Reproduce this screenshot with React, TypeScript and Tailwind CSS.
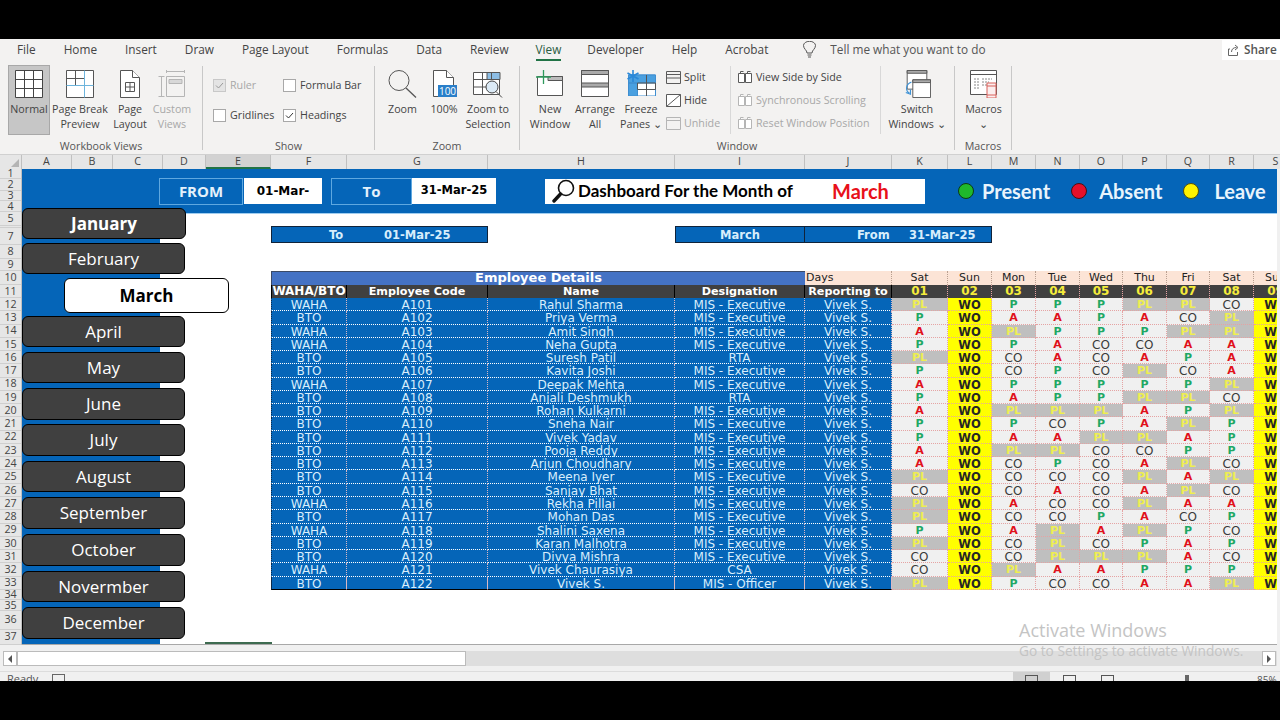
import React from "react";

const gutterRows = [
  ["1", "h-[10px]"], ["2", "h-[12px]"], ["3", "h-[10px]"], ["4", "h-[11px]"], ["5", "h-[14px]"], ["", "h-[2px]"],
  ["7", "h-[17px]"], ["8", "h-[14px]"], ["9", "h-[12px]"], ["10", "h-[14px]"], ["11", "h-[13px]"],
  ...Array.from({ length: 22 }, (_, i) => [String(i + 12), "h-[13.27px]"]),
  ["34", "h-[10px]"], ["35", "h-[11px]"], ["36", "h-[19px]"], ["37", "h-[15px]"],
];

const columns = [
  ["A", "w-[50px]"], ["B", "w-[41px]"], ["C", "w-[50px]"], ["D", "w-[43px]"], ["E", "w-[65px]"], ["F", "w-[76px]"],
  ["G", "w-[141px]"], ["H", "w-[187px]"], ["I", "w-[130px]"], ["J", "w-[87px]"], ["K", "w-[56px]"], ["L", "w-[44px]"],
  ["M", "w-[44px]"], ["N", "w-[44px]"], ["O", "w-[43px]"], ["P", "w-[44px]"], ["Q", "w-[43px]"], ["R", "w-[44px]"], ["S", "w-[44px]"],
];

const months = [
  { name: "January", cls: "mt-[-6px] h-[31px] w-[164px] bg-[#404040] text-white font-bold" },
  { name: "February", cls: "mt-[4px] h-[31px] w-[163px] bg-[#404040] text-white" },
  { name: "March", cls: "mt-[4px] ml-[42px] h-[35px] w-[165px] bg-white text-black font-bold" },
  { name: "April", cls: "mt-[3px] h-[31px] w-[163px] bg-[#404040] text-white" },
  { name: "May", cls: "mt-[5px] h-[31px] w-[163px] bg-[#404040] text-white" },
  { name: "June", cls: "mt-[5px] h-[32px] w-[163px] bg-[#404040] text-white" },
  { name: "July", cls: "mt-[4px] h-[32px] w-[163px] bg-[#404040] text-white" },
  { name: "August", cls: "mt-[5px] h-[31px] w-[163px] bg-[#404040] text-white" },
  { name: "September", cls: "mt-[5px] h-[32px] w-[163px] bg-[#404040] text-white" },
  { name: "October", cls: "mt-[5px] h-[32px] w-[163px] bg-[#404040] text-white" },
  { name: "Novermber", cls: "mt-[5px] h-[31px] w-[163px] bg-[#404040] text-white" },
  { name: "December", cls: "mt-[5px] h-[32px] w-[163px] bg-[#404040] text-white" },
];

const employees = [
  ["WAHA", "A101", "Rahul Sharma", "MIS - Executive", "PL WO P P P PL PL CO WO"],
  ["BTO", "A102", "Priya Verma", "MIS - Executive", "P WO A A P A CO PL WO"],
  ["WAHA", "A103", "Amit Singh", "MIS - Executive", "A WO PL P P P PL PL WO"],
  ["WAHA", "A104", "Neha Gupta", "MIS - Executive", "P WO P A CO CO A A WO"],
  ["BTO", "A105", "Suresh Patil", "RTA", "PL WO CO A CO A P A WO"],
  ["BTO", "A106", "Kavita Joshi", "MIS - Executive", "P WO CO P CO PL CO A WO"],
  ["WAHA", "A107", "Deepak Mehta", "MIS - Executive", "A WO P P P P P PL WO"],
  ["BTO", "A108", "Anjali Deshmukh", "RTA", "P WO A P P PL PL CO WO"],
  ["BTO", "A109", "Rohan Kulkarni", "MIS - Executive", "A WO PL PL PL A P PL WO"],
  ["BTO", "A110", "Sneha Nair", "MIS - Executive", "P WO P CO P A PL P WO"],
  ["BTO", "A111", "Vivek Yadav", "MIS - Executive", "P WO A A PL PL A P WO"],
  ["BTO", "A112", "Pooja Reddy", "MIS - Executive", "A WO PL PL CO CO P P WO"],
  ["BTO", "A113", "Arjun Choudhary", "MIS - Executive", "A WO CO P CO A PL CO WO"],
  ["BTO", "A114", "Meena Iyer", "MIS - Executive", "PL WO CO CO CO PL A PL WO"],
  ["BTO", "A115", "Sanjay Bhat", "MIS - Executive", "CO WO CO A CO A PL CO WO"],
  ["WAHA", "A116", "Rekha Pillai", "MIS - Executive", "PL WO A CO CO PL A A WO"],
  ["BTO", "A117", "Mohan Das", "MIS - Executive", "PL WO CO CO P A CO P WO"],
  ["WAHA", "A118", "Shalini Saxena", "MIS - Executive", "P WO A PL A PL P CO WO"],
  ["BTO", "A119", "Karan Malhotra", "MIS - Executive", "PL WO CO PL CO P A P WO"],
  ["BTO", "A120", "Divya Mishra", "MIS - Executive", "CO WO CO PL PL PL A CO WO"],
  ["WAHA", "A121", "Vivek Chaurasiya", "CSA", "CO WO PL A A P P P WO"],
  ["BTO", "A122", "Vivek S.", "MIS - Officer", "PL WO P CO CO A A PL WO"],
];

const days = [
  ["Sat", "01"], ["Sun", "02"], ["Mon", "03"], ["Tue", "04"], ["Wed", "05"],
  ["Thu", "06"], ["Fri", "07"], ["Sat", "08"], ["Sun", "09"],
];

const statusClass: Record<string, string> = {
  PL: "bg-[#bfbfbf] text-[#eeee50] font-bold text-[11px]",
  WO: "bg-[#ffff00] text-[#262626] font-bold text-[11.5px]",
  P: "bg-[#f0f0f0] text-[#1fa864] font-bold text-[11px]",
  A: "bg-[#f0f0f0] text-[#e0101a] font-bold text-[11px]",
  CO: "bg-[#f0f0f0] text-[#3a3a3a]",
};

const tabs = ["File", "Home", "Insert", "Draw", "Page Layout", "Formulas", "Data", "Review", "View", "Developer", "Help", "Acrobat"];

const line = "#5a5a5a";
const faint = "#b5b5b5";

const NormalIcon = () => (
  <svg width="28" height="28" viewBox="0 0 28 28" fill="#fff" stroke="#444">
    <path d="M.5.5h27v27H.5z" /><path d="M9.500.5v27M18.500.5v27M.5 9.500h27M.5 18.500h27" />
  </svg>
);
const PageBreakIcon = () => (
  <svg width="28" height="28" viewBox="0 0 28 28" fill="#fff" stroke="#555">
    <path d="M.5.5h27v27H.5z" /><path d="M9.500.5v15M.5 8.500h18" /><path d="M18.500.5v27M.5 15.500h27" stroke="#6db4dc" />
  </svg>
);
const PageLayoutIcon = () => (
  <svg width="24" height="28" viewBox="0 0 24 28" fill="#fff" stroke="#555">
    <path d="M2.500.5h12l7 7v20h-19z" /><path d="M14.500.5v7h7" /><path d="M7.500 12.500h9v9h-9zM7.500 17h9M12 12.500v9" fill="none" />
  </svg>
);
const CustomViewsIcon = () => (
  <svg width="28" height="28" viewBox="0 0 28 28" fill="none" stroke={faint}>
    <path d="M.5 6.500h6M3.500 6.500v20M.5 26.500h6M8.500 1.500h18M8.500 0v3M26.500 0v3M8.500 6.500h18v20h-18z" /><path d="M11 9.500h13v4H11z" fill="#d8d8d8" />
  </svg>
);
const ZoomIcon = () => (
  <svg width="29" height="28" viewBox="0 0 29 28" fill="none" stroke="#555">
    <circle cx="11" cy="10.500" r="10" /><path d="M18 18l10 9.500" strokeWidth="1.300" />
  </svg>
);
const HundredIcon = () => (
  <svg width="28" height="28" viewBox="0 0 28 28" fill="#fff" stroke="#555">
    <path d="M3.500.5h13l7 7v19h-20z" /><path d="M16.500.5v7h7" />
    <path d="M8 15h19v12H8z" fill="#2a7fc9" stroke="none" />
    <text x="17.500" y="25" fontSize="10" textAnchor="middle" fill="#fff" stroke="none" fontFamily="Open Sans">100</text>
  </svg>
);
const ZoomSelIcon = () => (
  <svg width="30" height="28" viewBox="0 0 30 28" fill="#fff" stroke="#555" className="mt-[2px]">
    <path d="M.5.5h26v22H.5z" /><path d="M14 .5h13v7H14z" fill="#8cbde4" /><path d="M9.500.5v22M18.500.5v7M.5 7.500h26M.5 15h13" />
    <circle cx="19" cy="15" r="6" fill="#dbeaf6" stroke="#444" /><path d="M23 19.500l6 6" stroke="#444" />
  </svg>
);
const NewWindowIcon = () => (
  <svg width="28" height="26" viewBox="0 0 28 26" fill="#fff" stroke="#555">
    <path d="M1.500 6.500h25v19h-25z" /><path d="M12 6.500h14.500v4H12z" fill="#bbb" />
    <path d="M7.500 0v14M0 7h15" stroke="#2e9a5c" strokeWidth="1.300" />
  </svg>
);
const ArrangeIcon = () => (
  <svg width="28" height="27" viewBox="0 0 28 27" fill="#fff" stroke="#555">
    <path d="M.5.5h27v26H.5z" /><path d="M.5.5h27v4H.5z" fill="#aaa" /><path d="M.5 13h27v4H.5z" fill="#aaa" />
  </svg>
);
const FreezeIcon = () => (
  <svg width="30" height="26" viewBox="0 0 30 26" fill="#fff" stroke="#3f8ed0">
    <path d="M2.500 5h27v21h-27z" /><path d="M2.500 5h27v8h-27zM2.500 13h9v13h-9z" fill="#4aa0e0" /><path d="M11.500 13h18v6.500h-18zM20.500 5v21" fill="none" stroke="#555" />
    <path d="M7 0v12M1.500 3l11 6M12.500 3l-11 6" stroke="#2b88d8" strokeWidth="1.600" />
  </svg>
);
const SplitIcon = () => (
  <svg width="15" height="13" viewBox="0 0 15 13" fill="none" stroke={line}>
    <path d="M.5.5h14v12H.5zM.5 3.500h14M.5 7h14" />
  </svg>
);
const HideIcon = () => (
  <svg width="15" height="13" viewBox="0 0 15 13" fill="#fff" stroke={line}>
    <path d="M.5.5h14v12H.5zM.5 12.500l14-12" />
  </svg>
);
const UnhideIcon = () => (
  <svg width="15" height="13" viewBox="0 0 15 13" fill="none" stroke={faint}>
    <path d="M.5.5h14v12H.5zM.5 3.500h14" />
  </svg>
);
const SideBySideIcon = ({ color = line }: { color?: string }) => (
  <svg width="14" height="13" viewBox="0 0 14 13" fill="#fff" stroke={color}>
    <path d="M.5 2.500h6v9h-6zM7.500 2.500h6v9h-6zM2.500 2.500v-2h3M9.500 2.500v-2h3" />
  </svg>
);
const SwitchIcon = () => (
  <svg width="28" height="28" viewBox="0 0 30 30" fill="#fff" stroke="#555">
    <path d="M4.500.5h21v20h-21z" /><path d="M4.500.5h21v3h-21z" fill="#aaa" />
    <path d="M10.500 10.500h19v19h-19z" /><path d="M10.500 10.500h19v3h-19z" fill="#aaa" />
    <path d="M9 13c-6 2-7 9-2 12M3 24l5 2 0-5" fill="none" stroke="#3f93d6" strokeWidth="1.200" />
  </svg>
);
const MacrosIcon = () => (
  <svg width="28" height="28" viewBox="0 0 28 28" fill="#fff" stroke="#555">
    <path d="M.5.5h26v24H.5z" /><path d="M.5 4.500h26" />
    <path d="M4 9h6M4 12h6M4 15h6M4 18h6M12 9h10M12 12h7M12 15h5" stroke="#888" strokeDasharray="2 1" />
    <path d="M17 13h9v15h-9z" fill="#fbeeee" stroke="#d8605a" /><path d="M17 16h9M17 25h9" stroke="#d8605a" />
  </svg>
);
const Bulb = () => (
  <svg width="13" height="17" viewBox="0 0 13 17" fill="none" stroke="#555">
    <path d="M4 12c0-3-3.500-4-3.500-7.500a6 4.200 0 0 1 12 0C12.500 8 9 9 9 12zM4.500 14h4M5 16h3" />
  </svg>
);
const ShareIcon = () => (
  <svg width="11" height="12" viewBox="0 0 11 12" fill="none" stroke="#666">
    <path d="M2 5H.5v6.500h9V8M3.500 8c0-3 2-4.500 5-4.500M7 1l3 2.500L7 6" />
  </svg>
);
const Loupe = () => (
  <svg width="23" height="24" viewBox="0 0 23 24" fill="none" stroke="#111">
    <circle cx="14" cy="9" r="7.500" strokeWidth="1.600" fill="#fff" /><path d="M8.500 15L2 22" strokeWidth="3.400" strokeLinecap="round" />
  </svg>
);

const BigBtn = ({ icon, lines, w, dim, active }: { icon: React.ReactNode; lines: string[]; w: string; dim?: boolean; active?: boolean }) => (
  <div className={`${w} flex flex-col items-center shrink-0 ${active ? "h-[70px] mt-[-1px] bg-[#c6c6c6] border border-[#a8a8a8]" : "h-[70px]"} ${dim ? "text-[#a8a8a8]" : "text-[#444]"}`}>
    <div className="h-[32px] flex items-start mt-[4px]">{icon}</div>
    {lines.map((l) => (
      <span key={l} className="leading-[15px] whitespace-nowrap">{l}</span>
    ))}
  </div>
);

const SmallBtn = ({ icon, label, dim, gap }: { icon: React.ReactNode; label: string; dim?: boolean; gap: string }) => (
  <div className={`h-[23px] flex items-center ${gap} whitespace-nowrap ${dim ? "text-[#a8a8a8]" : "text-[#444]"}`}>
    {icon}
    <span>{label}</span>
  </div>
);

const Check = ({ label, checked, dim }: { label: string; checked?: boolean; dim?: boolean }) => (
  <div className={`flex items-center gap-[4px] h-[30px] ${dim ? "text-[#a8a8a8]" : "text-[#444]"}`}>
    <span className={`w-[13px] h-[13px] border flex items-center justify-center ${dim ? "border-[#c8c8c8] bg-[#e4e4e4]" : "border-[#a8a8a8] bg-white"}`}>
      {checked && (
        <svg width="9" height="9" viewBox="0 0 9 9" fill="none" stroke={dim ? "#999" : "#333"}>
          <path d="M1 4.500l2.500 2.500L8 2" />
        </svg>
      )}
    </span>
    <span>{label}</span>
  </div>
);

const Group = ({ w, label, children }: { w: string; label: string; children: React.ReactNode }) => (
  <div className={`${w} shrink-0 h-[84px] border-r border-[#c8c8c8] flex flex-col`}>
    <div className="h-[70px] flex">{children}</div>
    <div className="mt-auto mb-[-3px] h-[14px] leading-[14px] text-center text-[#555] text-[10.7px]">{label}</div>
  </div>
);

const Ribbon = () => (
  <div className="bg-[#f3f2f1] h-[116px] shrink-0 font-['Open_Sans',sans-serif] text-[10.7px] border-b border-[#d0d0d0]">
    <div className="h-[21px] flex items-center pl-[3px] text-[11.8px] text-[#444] relative">
      {tabs.map((t) => (
        <span key={t} className={`whitespace-nowrap ${t === "View" ? "relative font-medium text-[#2b5c43] pl-[13px] pr-[12px]" : "px-[14px]"}`}>
          {t}
          {t === "View" && <span className="absolute left-[13px] right-[12px] top-[18px] h-[2px] bg-[#217346]" />}
        </span>
      ))}
      <span className="ml-[21px]"><Bulb /></span>
      <span className="ml-[14px] text-[#555]">Tell me what you want to do</span>
      <div className="ml-auto w-[58px] h-[20px] bg-white flex items-center gap-[5px] pl-[6px] text-[#555] font-semibold whitespace-nowrap">
        <ShareIcon />Share
      </div>
    </div>
    <div className="flex pt-[6px]">
      <Group w="w-[203px]" label="Workbook Views">
        <div className="w-[8px]" />
        <BigBtn active w="w-[42px]" icon={<NormalIcon />} lines={["Normal"]} />
        <BigBtn w="w-[60px]" icon={<PageBreakIcon />} lines={["Page Break", "Preview"]} />
        <BigBtn w="w-[40px]" icon={<PageLayoutIcon />} lines={["Page", "Layout"]} />
        <BigBtn dim w="w-[44px]" icon={<CustomViewsIcon />} lines={["Custom", "Views"]} />
      </Group>
      <Group w="w-[172px]" label="Show">
        <div className="pl-[10px] pt-[4px] w-[80px]">
          <Check dim checked label="Ruler" />
          <Check label="Gridlines" />
        </div>
        <div className="pt-[4px]">
          <Check label="Formula Bar" />
          <Check checked label="Headings" />
        </div>
      </Group>
      <Group w="w-[145px]" label="Zoom">
        <div className="w-[6px]" />
        <BigBtn w="w-[43px]" icon={<ZoomIcon />} lines={["Zoom"]} />
        <BigBtn w="w-[40px]" icon={<HundredIcon />} lines={["100%"]} />
        <BigBtn w="w-[48px]" icon={<ZoomSelIcon />} lines={["Zoom to", "Selection"]} />
      </Group>
      <Group w="w-[435px]" label="Window">
        <div className="w-[8px]" />
        <BigBtn w="w-[44px]" icon={<NewWindowIcon />} lines={["New", "Window"]} />
        <BigBtn w="w-[46px]" icon={<ArrangeIcon />} lines={["Arrange", "All"]} />
        <BigBtn w="w-[46px]" icon={<FreezeIcon />} lines={["Freeze", "Panes ⌄"]} />
        <div className="pl-[2px] w-[67px] border-r border-[#d8d8d8] h-[68px]">
          <SmallBtn gap="gap-[3px]" icon={<SplitIcon />} label="Split" />
          <SmallBtn gap="gap-[3px]" icon={<HideIcon />} label="Hide" />
          <SmallBtn gap="gap-[3px]" dim icon={<UnhideIcon />} label="Unhide" />
        </div>
        <div className="pl-[7px] w-[150px] border-r border-[#d8d8d8] h-[68px]">
          <SmallBtn gap="gap-[4px]" icon={<SideBySideIcon />} label="View Side by Side" />
          <SmallBtn gap="gap-[4px]" dim icon={<SideBySideIcon color={faint} />} label="Synchronous Scrolling" />
          <SmallBtn gap="gap-[4px]" dim icon={<SideBySideIcon color={faint} />} label="Reset Window Position" />
        </div>
        <BigBtn w="w-[72px]" icon={<SwitchIcon />} lines={["Switch", "Windows ⌄"]} />
      </Group>
      <Group w="w-[57px]" label="Macros">
        <BigBtn w="w-[57px]" icon={<MacrosIcon />} lines={["Macros", "⌄"]} />
      </Group>
    </div>
  </div>
);

const ColumnHeaders = () => (
  <div className="h-[14px] shrink-0 flex bg-[#e6e6e6] font-['Open_Sans',sans-serif] text-[10.7px] text-[#444] leading-[13px] overflow-hidden">
    <div className="w-[22px] shrink-0 border-r border-[#c0c0c0] flex items-end justify-end">
      <span className="w-0 h-0 border-l-[8px] border-b-[8px] border-l-transparent border-b-[#b4b4b4] mr-[2px] mb-[2px]" />
    </div>
    {columns.map(([c, w]) => (
      <div key={c} className={`${w} shrink-0 text-center border-r border-[#c0c0c0] ${c === "E" ? "bg-[#d2d2d2] border-b-2 border-b-[#217346]" : ""}`}>{c}</div>
    ))}
  </div>
);

const RowGutter = () => (
  <div className="w-[22px] shrink-0 bg-[#e6e6e6] border-r border-[#c0c0c0] font-['Open_Sans',sans-serif] text-[10.7px] text-[#444]">
    {gutterRows.map(([n, h]) => (
      <div key={n + h} className={`${h} flex items-center justify-center leading-none border-b border-[#cfcfcf]`}>{n}</div>
    ))}
  </div>
);

const TopBand = () => (
  <div className="h-[45px] shrink-0 bg-[#0565b8] border-b border-[#9fcdf0] flex items-center text-white">
    <div className="ml-[137px] w-[84px] h-[27px] border border-[#5fa8e0] flex items-center justify-center font-['Open_Sans',sans-serif] font-bold text-[15px] text-[#e4f1fb]">FROM</div>
    <div className="ml-[1px] w-[78px] h-[26px] bg-white text-black flex items-center justify-center font-['DejaVu_Sans',sans-serif] font-bold text-[12px]">01-Mar-</div>
    <div className="ml-[9px] w-[81px] h-[27px] border border-[#5fa8e0] flex items-center justify-center font-['Open_Sans',sans-serif] font-bold text-[15px] text-[#e4f1fb]">To</div>
    <div className="w-[84px] h-[26px] bg-white text-black flex items-center justify-center font-['DejaVu_Sans',sans-serif] font-bold text-[11.5px]">31-Mar-25</div>
    <div className="ml-[49px] w-[380px] h-[25px] bg-white text-black flex items-center pl-[7px] font-['Lato',sans-serif] font-bold whitespace-nowrap">
      <Loupe />
      <span className="ml-[3px] text-[17px] w-[254px]">Dashboard For the Month of</span>
      <span className="text-[20px] text-[#e8101a]">March</span>
    </div>
    <div className="ml-[33px] flex items-center font-['Lato',sans-serif] font-bold text-[20px] text-[#e9f4fc] whitespace-nowrap">
      <span className="w-[16px] h-[16px] rounded-full bg-[#1fb82c] border border-[#0d3b12]" />
      <span className="ml-[8px]">Present</span>
      <span className="ml-[21px] w-[16px] h-[16px] rounded-full bg-[#e5102a] border border-[#4b0d12]" />
      <span className="ml-[12px]">Absent</span>
      <span className="ml-[21px] w-[16px] h-[16px] rounded-full bg-[#fff200] border border-[#55500a]" />
      <span className="ml-[15px]">Leave</span>
    </div>
  </div>
);

const Sidebar = () => (
  <div className="w-[138px] shrink-0 bg-[#0565b8] relative z-10 flex flex-col font-['Open_Sans',sans-serif] text-[17px]">
    {months.map((m) => (
      <div key={m.name} className={`${m.cls} shrink-0 border border-black rounded-[6px] flex items-center justify-center`}>{m.name}</div>
    ))}
  </div>
);

const AttendanceTable = () => (
  <div className="mt-[28px] w-[1006px] overflow-hidden font-['DejaVu_Sans',sans-serif] text-[12px]">
    <div className="grid grid-cols-[76px_141px_187px_130px_87px_56px_44px_44px_44px_43px_44px_43px_44px_44px] grid-rows-[14px_13px] auto-rows-[13.27px] leading-[14px] text-center whitespace-nowrap">
      <div className="col-span-4 bg-[#4472c4] border-l border-t border-[#3b4a66] text-white font-bold text-[13px] leading-[12px]">Employee Details</div>
      <div className="bg-[#fce4d6] text-left pl-[1px] text-[11px] text-[#222] border-r border-dotted border-[#b9a090]">Days</div>
      {days.map(([d], i) => (
        <div key={i} className="bg-[#fce4d6] text-[11px] text-[#222] border-r border-dotted border-[#b9a090]">{d}</div>
      ))}
      {["WAHA/BTO", "Employee Code", "Name", "Designation", "Reporting to"].map((h, i) => (
        <div key={h} className={`bg-[#404040] text-white font-bold leading-[13px] border-r border-black ${i === 0 ? "border-l text-[12px]" : "text-[11.2px]"}`}>{h}</div>
      ))}
      {days.map(([, n], i) => (
        <div key={i} className="bg-[#404040] text-[#f5ec3b] font-bold leading-[13px] border-r border-dotted border-[#e5a3a3]">{n}</div>
      ))}
      {employees.map((row, r) => {
        const blue = `bg-[#0565b8] text-[#d8eefc] border-r border-dotted border-r-[#d9b8c4] ${r === employees.length - 1 ? "border-b border-b-black border-solid" : "border-b border-b-white"}`;
        return (
          <React.Fragment key={row[1]}>
            <div className={`${blue} border-l border-l-[#0b2a4a]`}>{row[0]}</div>
            <div className={blue}>{row[1]}</div>
            <div className={blue}>{row[2]}</div>
            <div className={blue}>{row[3]}</div>
            <div className={blue}>Vivek S.</div>
            {row[4].split(" ").map((s, i) => (
              <div key={i} className={`${statusClass[s]} border-b border-r border-dotted border-[#e5a3a3]`}>{s}</div>
            ))}
          </React.Fragment>
        );
      })}
    </div>
  </div>
);

const Sheet = () => (
  <div className="h-[476px] shrink-0 flex overflow-hidden bg-[#f0f0f0]">
    <RowGutter />
    <div className="w-[1255px] shrink-0 bg-white flex flex-col relative border-b border-[#a8a8a8]">
      <TopBand />
      <div className="flex-1 flex">
        <Sidebar />
        <div className="flex-1 pl-[111px] pt-[12px]">
          <div className="flex h-[17px] font-['DejaVu_Sans',sans-serif] font-bold text-[11.5px] text-[#d8eefc] leading-[16px] whitespace-nowrap">
            <div className="w-[217px] bg-[#0565b8] border border-[#10233a] flex">
              <span className="ml-[57px] w-[55px]">To</span>
              <span>01-Mar-25</span>
            </div>
            <div className="w-[187px]" />
            <div className="w-[130px] bg-[#0565b8] border border-[#10233a] text-center">March</div>
            <div className="w-[187px] bg-[#0565b8] border border-[#10233a] border-l-0 flex">
              <span className="ml-[52px] w-[52px]">From</span>
              <span>31-Mar-25</span>
            </div>
          </div>
          <AttendanceTable />
        </div>
      </div>
      <div className="absolute left-[183px] bottom-0 w-[67px] h-[2px] bg-[#3d6b50]" />
    </div>
  </div>
);

const ScrollArea = () => (
  <div className="h-[27px] shrink-0 bg-[#f0f0f0] px-[3px] pt-[6px] border-b border-[#dcdcdc] flex items-start">
    <div className="w-full h-[15px] bg-[#dedede] flex items-stretch">
      <div className="w-[14px] bg-white border border-[#bbb] flex items-center justify-center">
        <span className="w-0 h-0 border-y-[4px] border-r-[4px] border-y-transparent border-r-[#555]" />
      </div>
      <div className="w-[449px] bg-white border border-[#bbb]" />
      <div className="flex-1" />
      <div className="w-[14px] bg-white border border-[#bbb] flex items-center justify-center mr-[1px]">
        <span className="w-0 h-0 border-y-[4px] border-l-[4px] border-y-transparent border-l-[#555]" />
      </div>
    </div>
  </div>
);

const StatusBar = () => (
  <div className="h-[9px] shrink-0 bg-[#f0f0f0] flex overflow-hidden font-['Open_Sans',sans-serif] text-[11px] text-[#555] relative">
    <span className="ml-[7px] leading-[13px]">Ready</span>
    <span className="ml-[14px] mt-[2px] w-[13px] h-[12px] border border-[#666]" />
    <div className="ml-auto flex h-full">
      <div className="w-[37px] bg-[#d0d0d0] flex justify-center pt-[3px]"><span className="w-[13px] h-[12px] border border-[#555]" /></div>
      <div className="w-[38px] flex justify-center pt-[3px]"><span className="w-[13px] h-[12px] border border-[#555]" /></div>
      <div className="w-[38px] flex justify-center pt-[3px]"><span className="w-[13px] h-[12px] border border-[#555]" /></div>
      <div className="w-[154px] flex pt-[3px] pl-[59px]"><span className="w-[4px] h-[8px] bg-[#666]" /><span className="ml-[68px] text-[10px] leading-[10px]">85%</span></div>
    </div>
  </div>
);

export default function App() {
  return (
    <div className="w-[1280px] h-[720px] overflow-hidden bg-black flex flex-col relative">
      <div className="h-[39px] shrink-0" />
      <Ribbon />
      <ColumnHeaders />
      <Sheet />
      <ScrollArea />
      <StatusBar />
      {/* windows watermark sits over the sheet and the scrollbar */}
      <div className="absolute left-[1019px] top-[618px] font-['Open_Sans',sans-serif] text-[#c4c4c4] whitespace-nowrap">
        <div className="text-[18px] leading-[24px]">Activate Windows</div>
        <div className="text-[13.7px] leading-[18px]">Go to Settings to activate Windows.</div>
      </div>
    </div>
  );
}
